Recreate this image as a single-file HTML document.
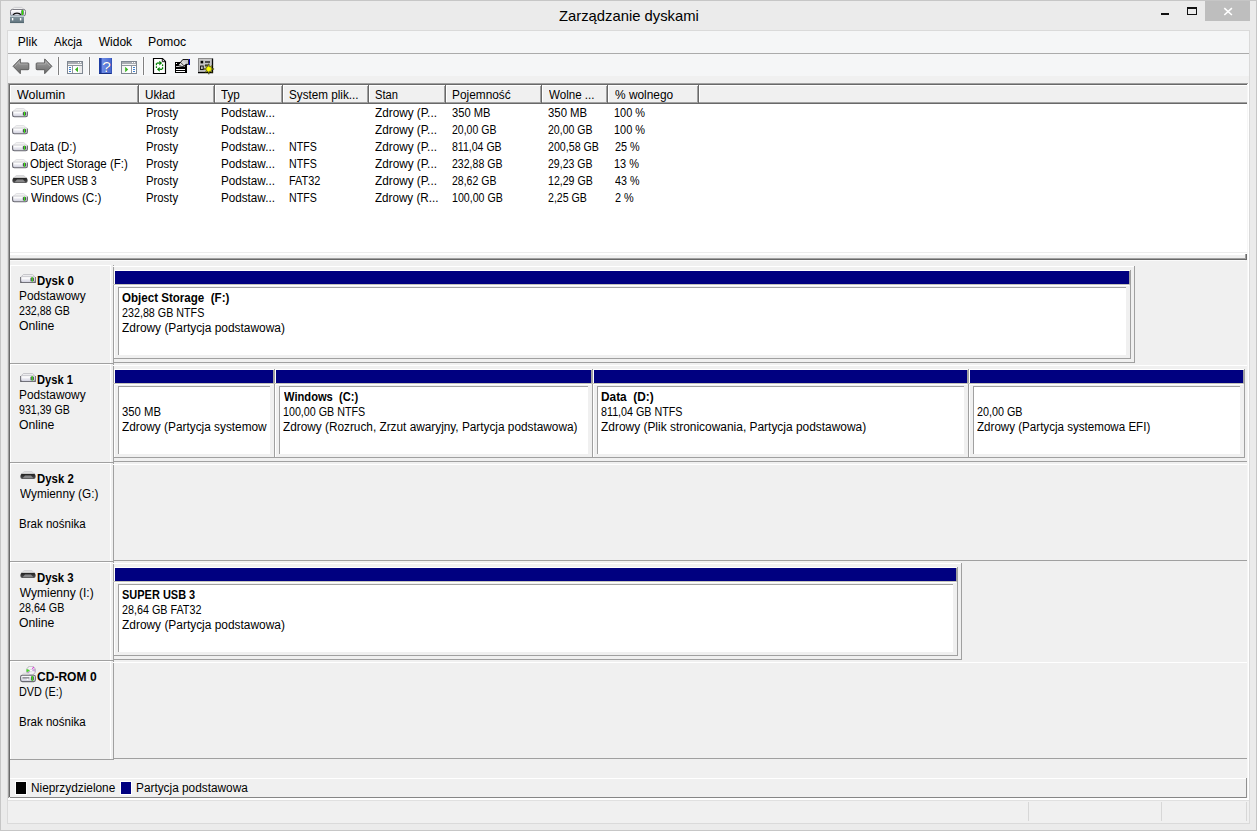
<!DOCTYPE html>
<html lang="pl"><head><meta charset="utf-8"><title>Zarządzanie dyskami</title>
<style>
html,body{margin:0;padding:0}
body{width:1257px;height:831px;position:relative;overflow:hidden;background:#ebebeb;font:12px/16px "Liberation Sans",sans-serif;color:#000}
div,span,svg{position:absolute;box-sizing:border-box}
.t{white-space:pre;line-height:16px;height:16px;transform-origin:0 0}
.b{font-weight:bold}
.nv{background:#000080}
.g{background:#a0a0a0}
.w{background:#fff}
.d{background:#696969}
.f{background:#f0f0f0}
</style></head><body>

<div style="left:0;top:0;width:1257px;height:831px;border:1px solid #c6c6c6"></div>
<div style="left:7px;top:30px;width:1243px;height:794px;border:1px solid #dadada;background:#f0f0f0"></div>
<div class="" style="left:1205px;top:1px;width:45px;height:20px;background:#bebebe"></div>
<svg style="left:1223px;top:6px" width="11" height="11" viewBox="0 0 11 11"><path d="M1.3 2.1 L8.9 9 M8.9 2.1 L1.3 9" stroke="#fff" stroke-width="1.6" fill="none"/></svg>
<div class="" style="left:1161px;top:13px;width:8px;height:2px;background:#111"></div>
<div style="left:1187px;top:7px;width:10px;height:8px;border:1px solid #111;border-top-width:2px"></div>
<div class="" style="left:8px;top:31px;width:1241px;height:22px;background:#f5f6f7"></div>
<div class="" style="left:8px;top:53px;width:1241px;height:1px;background:#ababab"></div>
<div class="" style="left:8px;top:54px;width:1241px;height:22px;background:#f5f6f7"></div>
<div class="" style="left:58px;top:57px;width:1px;height:18px;background:#808080;box-shadow:1px 0 0 #fbfbfc,-1px 0 0 #fbfbfc"></div>
<div class="" style="left:89px;top:57px;width:1px;height:18px;background:#808080;box-shadow:1px 0 0 #fbfbfc,-1px 0 0 #fbfbfc"></div>
<div class="" style="left:143px;top:57px;width:1px;height:18px;background:#808080;box-shadow:1px 0 0 #fbfbfc,-1px 0 0 #fbfbfc"></div>
<div class="" style="left:8px;top:83px;width:1241px;height:177px;background:#fff"></div>
<div class="g" style="left:8px;top:83px;width:1241px;height:1px;"></div>
<div class="g" style="left:8px;top:83px;width:1px;height:177px;"></div>
<div class="d" style="left:9px;top:84px;width:1239px;height:1px;"></div>
<div class="d" style="left:9px;top:84px;width:1px;height:175px;"></div>
<div class="f" style="left:10px;top:85px;width:1237px;height:19px;"></div>
<div class="w" style="left:10px;top:85px;width:1237px;height:1px;"></div>
<div class="g" style="left:10px;top:102px;width:1237px;height:1px;"></div>
<div class="d" style="left:10px;top:103px;width:1237px;height:1px;"></div>
<div class="g" style="left:137px;top:86px;width:1px;height:17px;"></div>
<div class="d" style="left:138px;top:85px;width:1px;height:19px;"></div>
<div class="w" style="left:139px;top:85px;width:1px;height:17px;"></div>
<div class="g" style="left:213px;top:86px;width:1px;height:17px;"></div>
<div class="d" style="left:214px;top:85px;width:1px;height:19px;"></div>
<div class="w" style="left:215px;top:85px;width:1px;height:17px;"></div>
<div class="g" style="left:281px;top:86px;width:1px;height:17px;"></div>
<div class="d" style="left:282px;top:85px;width:1px;height:19px;"></div>
<div class="w" style="left:283px;top:85px;width:1px;height:17px;"></div>
<div class="g" style="left:367px;top:86px;width:1px;height:17px;"></div>
<div class="d" style="left:368px;top:85px;width:1px;height:19px;"></div>
<div class="w" style="left:369px;top:85px;width:1px;height:17px;"></div>
<div class="g" style="left:444px;top:86px;width:1px;height:17px;"></div>
<div class="d" style="left:445px;top:85px;width:1px;height:19px;"></div>
<div class="w" style="left:446px;top:85px;width:1px;height:17px;"></div>
<div class="g" style="left:540px;top:86px;width:1px;height:17px;"></div>
<div class="d" style="left:541px;top:85px;width:1px;height:19px;"></div>
<div class="w" style="left:542px;top:85px;width:1px;height:17px;"></div>
<div class="g" style="left:606px;top:86px;width:1px;height:17px;"></div>
<div class="d" style="left:607px;top:85px;width:1px;height:19px;"></div>
<div class="w" style="left:608px;top:85px;width:1px;height:17px;"></div>
<div class="g" style="left:697px;top:86px;width:1px;height:17px;"></div>
<div class="d" style="left:698px;top:85px;width:1px;height:19px;"></div>
<div class="w" style="left:699px;top:85px;width:1px;height:17px;"></div>
<div class="w" style="left:10px;top:85px;width:1px;height:17px;"></div>
<div class="" style="left:10px;top:252px;width:1237px;height:1px;background:#ececec"></div>
<div class="f" style="left:10px;top:255px;width:1237px;height:5px;"></div>
<div class="g" style="left:10px;top:258px;width:1237px;height:1px;"></div>
<div class="d" style="left:10px;top:259px;width:1237px;height:1px;"></div>
<div class="g" style="left:1245px;top:254px;width:1px;height:5px;"></div>
<div class="d" style="left:1246px;top:254px;width:1px;height:6px;"></div>
<div class="f" style="left:8px;top:260px;width:1241px;height:538px;"></div>
<div class="g" style="left:8px;top:258px;width:1px;height:540px;"></div>
<div class="d" style="left:9px;top:259px;width:1px;height:538px;"></div>
<div class="" style="left:10px;top:260px;width:1235px;height:1px;background:#fafafa"></div>
<div class="" style="left:1247px;top:84px;width:1px;height:715px;background:#f6f6f6"></div>
<div class="w" style="left:1248px;top:83px;width:1px;height:717px;"></div>
<div class="w" style="left:10px;top:265px;width:101px;height:1px;"></div>
<div class="w" style="left:10px;top:265px;width:1px;height:98px;"></div>
<div class="w" style="left:110px;top:265px;width:1px;height:98px;"></div>
<div class="g" style="left:10px;top:363px;width:103px;height:1px;"></div>
<div class="g" style="left:113px;top:265px;width:1px;height:99px;"></div>
<div class="w" style="left:113px;top:266px;width:1021px;height:1px;"></div>
<div class="w" style="left:10px;top:364px;width:101px;height:1px;"></div>
<div class="w" style="left:10px;top:364px;width:1px;height:98px;"></div>
<div class="w" style="left:110px;top:364px;width:1px;height:98px;"></div>
<div class="g" style="left:10px;top:462px;width:103px;height:1px;"></div>
<div class="g" style="left:113px;top:364px;width:1px;height:99px;"></div>
<div class="w" style="left:113px;top:365px;width:1134px;height:1px;"></div>
<div class="w" style="left:10px;top:463px;width:101px;height:1px;"></div>
<div class="w" style="left:10px;top:463px;width:1px;height:98px;"></div>
<div class="w" style="left:110px;top:463px;width:1px;height:98px;"></div>
<div class="g" style="left:10px;top:561px;width:103px;height:1px;"></div>
<div class="g" style="left:113px;top:463px;width:1px;height:99px;"></div>
<div class="w" style="left:113px;top:464px;width:1134px;height:1px;"></div>
<div class="w" style="left:10px;top:562px;width:101px;height:1px;"></div>
<div class="w" style="left:10px;top:562px;width:1px;height:98px;"></div>
<div class="w" style="left:110px;top:562px;width:1px;height:98px;"></div>
<div class="g" style="left:10px;top:660px;width:103px;height:1px;"></div>
<div class="g" style="left:113px;top:562px;width:1px;height:99px;"></div>
<div class="w" style="left:113px;top:563px;width:848px;height:1px;"></div>
<div class="w" style="left:10px;top:661px;width:101px;height:1px;"></div>
<div class="w" style="left:10px;top:661px;width:1px;height:98px;"></div>
<div class="w" style="left:110px;top:661px;width:1px;height:98px;"></div>
<div class="g" style="left:10px;top:759px;width:103px;height:1px;"></div>
<div class="g" style="left:113px;top:661px;width:1px;height:99px;"></div>
<div class="w" style="left:113px;top:662px;width:1134px;height:1px;"></div>
<div class="g" style="left:114px;top:362px;width:1021px;height:1px;"></div>
<div class="g" style="left:1134px;top:266px;width:1px;height:97px;"></div>
<div class="g" style="left:114px;top:461px;width:1133px;height:1px;"></div>
<div class="g" style="left:114px;top:560px;width:1133px;height:1px;"></div>
<div class="g" style="left:114px;top:659px;width:848px;height:1px;"></div>
<div class="g" style="left:961px;top:563px;width:1px;height:97px;"></div>
<div class="g" style="left:114px;top:758px;width:1133px;height:1px;"></div>
<div class="w" style="left:114px;top:270px;width:1016px;height:1px;"></div>
<div class="w" style="left:114px;top:270px;width:1px;height:88px;"></div>
<div class="g" style="left:1130px;top:270px;width:1px;height:89px;"></div>
<div class="g" style="left:114px;top:358px;width:1017px;height:1px;"></div>
<div class="nv" style="left:115px;top:271px;width:1014px;height:13px;"></div>
<div class="g" style="left:1129px;top:271px;width:1px;height:13px;"></div>
<div class="" style="left:113px;top:284px;width:1017px;height:1px;background:#c4c4bc"></div>
<div class="w" style="left:115px;top:285px;width:1014px;height:1px;"></div>
<div style="left:118px;top:287px;width:1008px;height:68px;background:#fff;border-left:1px solid #a0a0a0;border-top:1px solid #a0a0a0"></div>
<div class="w" style="left:114px;top:369px;width:160px;height:1px;"></div>
<div class="w" style="left:114px;top:369px;width:1px;height:88px;"></div>
<div class="g" style="left:274px;top:369px;width:1px;height:89px;"></div>
<div class="g" style="left:114px;top:457px;width:161px;height:1px;"></div>
<div class="nv" style="left:115px;top:370px;width:158px;height:13px;"></div>
<div class="g" style="left:273px;top:370px;width:1px;height:13px;"></div>
<div class="" style="left:113px;top:383px;width:161px;height:1px;background:#c4c4bc"></div>
<div class="w" style="left:115px;top:384px;width:158px;height:1px;"></div>
<div style="left:118px;top:386px;width:152px;height:68px;background:#fff;border-left:1px solid #a0a0a0;border-top:1px solid #a0a0a0"></div>
<div class="w" style="left:275px;top:369px;width:317px;height:1px;"></div>
<div class="w" style="left:275px;top:369px;width:1px;height:88px;"></div>
<div class="g" style="left:592px;top:369px;width:1px;height:89px;"></div>
<div class="g" style="left:275px;top:457px;width:318px;height:1px;"></div>
<div class="nv" style="left:276px;top:370px;width:315px;height:13px;"></div>
<div class="g" style="left:591px;top:370px;width:1px;height:13px;"></div>
<div class="" style="left:274px;top:383px;width:318px;height:1px;background:#c4c4bc"></div>
<div class="w" style="left:276px;top:384px;width:315px;height:1px;"></div>
<div style="left:279px;top:386px;width:309px;height:68px;background:#fff;border-left:1px solid #a0a0a0;border-top:1px solid #a0a0a0"></div>
<div class="w" style="left:593px;top:369px;width:375px;height:1px;"></div>
<div class="w" style="left:593px;top:369px;width:1px;height:88px;"></div>
<div class="g" style="left:968px;top:369px;width:1px;height:89px;"></div>
<div class="g" style="left:593px;top:457px;width:376px;height:1px;"></div>
<div class="nv" style="left:594px;top:370px;width:373px;height:13px;"></div>
<div class="g" style="left:967px;top:370px;width:1px;height:13px;"></div>
<div class="" style="left:592px;top:383px;width:376px;height:1px;background:#c4c4bc"></div>
<div class="w" style="left:594px;top:384px;width:373px;height:1px;"></div>
<div style="left:597px;top:386px;width:367px;height:68px;background:#fff;border-left:1px solid #a0a0a0;border-top:1px solid #a0a0a0"></div>
<div class="w" style="left:969px;top:369px;width:275px;height:1px;"></div>
<div class="w" style="left:969px;top:369px;width:1px;height:88px;"></div>
<div class="g" style="left:1244px;top:369px;width:1px;height:89px;"></div>
<div class="g" style="left:969px;top:457px;width:276px;height:1px;"></div>
<div class="nv" style="left:970px;top:370px;width:273px;height:13px;"></div>
<div class="g" style="left:1243px;top:370px;width:1px;height:13px;"></div>
<div class="" style="left:968px;top:383px;width:276px;height:1px;background:#c4c4bc"></div>
<div class="w" style="left:970px;top:384px;width:273px;height:1px;"></div>
<div style="left:973px;top:386px;width:267px;height:68px;background:#fff;border-left:1px solid #a0a0a0;border-top:1px solid #a0a0a0"></div>
<div class="w" style="left:114px;top:567px;width:843px;height:1px;"></div>
<div class="w" style="left:114px;top:567px;width:1px;height:88px;"></div>
<div class="g" style="left:957px;top:567px;width:1px;height:89px;"></div>
<div class="g" style="left:114px;top:655px;width:844px;height:1px;"></div>
<div class="nv" style="left:115px;top:568px;width:841px;height:13px;"></div>
<div class="g" style="left:956px;top:568px;width:1px;height:13px;"></div>
<div class="" style="left:113px;top:581px;width:844px;height:1px;background:#c4c4bc"></div>
<div class="w" style="left:115px;top:582px;width:841px;height:1px;"></div>
<div style="left:118px;top:584px;width:835px;height:68px;background:#fff;border-left:1px solid #a0a0a0;border-top:1px solid #a0a0a0"></div>
<div class="w" style="left:10px;top:778px;width:1237px;height:1px;"></div>
<div class="w" style="left:15px;top:781px;width:12px;height:14px;"></div>
<div class="" style="left:16px;top:782px;width:10px;height:12px;background:#000"></div>
<div class="w" style="left:120px;top:781px;width:12px;height:14px;"></div>
<div class="nv" style="left:121px;top:782px;width:10px;height:12px;"></div>
<div class="" style="left:10px;top:797px;width:1237px;height:1px;background:#868686"></div>
<div class="" style="left:1246px;top:778px;width:1px;height:20px;background:#909090"></div>
<div class="w" style="left:8px;top:798px;width:1241px;height:2px;"></div>
<div style="left:8px;top:800px;width:1241px;height:23px;background:#f0f0f0;border-top:1px solid #e0e0e0"></div>
<div class="" style="left:1028px;top:802px;width:1px;height:19px;background:#d7d7d7"></div>
<div class="" style="left:1161px;top:802px;width:1px;height:19px;background:#d7d7d7"></div>
<div class="" style="left:1246px;top:802px;width:1px;height:19px;background:#d7d7d7"></div>
<span class="t" style="left:558.63px;top:7.5px;transform:scaleX(0.9869);font-size:15px">Zarządzanie dyskami</span>
<span class="t" style="left:17.82px;top:34.0px">Plik</span>
<span class="t" style="left:53.78px;top:34.0px;transform:scaleX(0.9584)">Akcja</span>
<span class="t" style="left:98.75px;top:34.0px">Widok</span>
<span class="t" style="left:147.89px;top:34.0px;transform:scaleX(1.0237)">Pomoc</span>
<span class="t" style="left:16.65px;top:86.5px;transform:scaleX(1.0383)">Wolumin</span>
<span class="t" style="left:145.40px;top:86.5px;transform:scaleX(0.9765)">Układ</span>
<span class="t" style="left:221.44px;top:86.5px;transform:scaleX(0.9724)">Typ</span>
<span class="t" style="left:288.97px;top:86.5px;transform:scaleX(0.9740)">System plik...</span>
<span class="t" style="left:375.19px;top:86.5px;transform:scaleX(0.9289)">Stan</span>
<span class="t" style="left:451.93px;top:86.5px;transform:scaleX(0.9886)">Pojemność</span>
<span class="t" style="left:548.85px;top:86.5px;transform:scaleX(0.9653)">Wolne ...</span>
<span class="t" style="left:614.78px;top:86.5px;transform:scaleX(0.9918)">% wolnego</span>
<span class="t" style="left:145.57px;top:105.0px;transform:scaleX(0.9424)">Prosty</span>
<span class="t" style="left:221.04px;top:105.0px;transform:scaleX(0.9732)">Podstaw...</span>
<span class="t" style="left:375.33px;top:105.0px;transform:scaleX(0.9810)">Zdrowy (P...</span>
<span class="t" style="left:452.48px;top:105.0px;transform:scaleX(0.9288)">350 MB</span>
<span class="t" style="left:548.27px;top:105.0px;transform:scaleX(0.9462)">350 MB</span>
<span class="t" style="left:614.37px;top:105.0px;transform:scaleX(0.9118)">100 %</span>
<span class="t" style="left:145.57px;top:122.0px;transform:scaleX(0.9424)">Prosty</span>
<span class="t" style="left:221.04px;top:122.0px;transform:scaleX(0.9732)">Podstaw...</span>
<span class="t" style="left:375.33px;top:122.0px;transform:scaleX(0.9810)">Zdrowy (P...</span>
<span class="t" style="left:452.37px;top:122.0px;transform:scaleX(0.8754)">20,00 GB</span>
<span class="t" style="left:548.17px;top:122.0px;transform:scaleX(0.8774)">20,00 GB</span>
<span class="t" style="left:614.37px;top:122.0px;transform:scaleX(0.9118)">100 %</span>
<span class="t" style="left:29.96px;top:139.0px;transform:scaleX(0.9500)">Data (D:)</span>
<span class="t" style="left:145.57px;top:139.0px;transform:scaleX(0.9424)">Prosty</span>
<span class="t" style="left:221.04px;top:139.0px;transform:scaleX(0.9732)">Podstaw...</span>
<span class="t" style="left:289.33px;top:139.0px;transform:scaleX(0.8861)">NTFS</span>
<span class="t" style="left:375.33px;top:139.0px;transform:scaleX(0.9810)">Zdrowy (P...</span>
<span class="t" style="left:452.44px;top:139.0px;transform:scaleX(0.8787)">811,04 GB</span>
<span class="t" style="left:548.16px;top:139.0px;transform:scaleX(0.8871)">200,58 GB</span>
<span class="t" style="left:614.65px;top:139.0px;transform:scaleX(0.9042)">25 %</span>
<span class="t" style="left:30.35px;top:156.0px;transform:scaleX(0.9591)">Object Storage (F:)</span>
<span class="t" style="left:145.57px;top:156.0px;transform:scaleX(0.9424)">Prosty</span>
<span class="t" style="left:221.04px;top:156.0px;transform:scaleX(0.9732)">Podstaw...</span>
<span class="t" style="left:289.33px;top:156.0px;transform:scaleX(0.8861)">NTFS</span>
<span class="t" style="left:375.33px;top:156.0px;transform:scaleX(0.9810)">Zdrowy (P...</span>
<span class="t" style="left:452.37px;top:156.0px;transform:scaleX(0.8800)">232,88 GB</span>
<span class="t" style="left:548.17px;top:156.0px;transform:scaleX(0.8774)">29,23 GB</span>
<span class="t" style="left:614.36px;top:156.0px;transform:scaleX(0.9150)">13 %</span>
<span class="t" style="left:30.44px;top:173.0px;transform:scaleX(0.8405)">SUPER USB 3</span>
<span class="t" style="left:145.57px;top:173.0px;transform:scaleX(0.9424)">Prosty</span>
<span class="t" style="left:221.04px;top:173.0px;transform:scaleX(0.9732)">Podstaw...</span>
<span class="t" style="left:289.30px;top:173.0px;transform:scaleX(0.9122)">FAT32</span>
<span class="t" style="left:375.33px;top:173.0px;transform:scaleX(0.9810)">Zdrowy (P...</span>
<span class="t" style="left:452.37px;top:173.0px;transform:scaleX(0.8754)">28,62 GB</span>
<span class="t" style="left:547.89px;top:173.0px;transform:scaleX(0.8829)">12,29 GB</span>
<span class="t" style="left:614.95px;top:173.0px;transform:scaleX(0.8931)">43 %</span>
<span class="t" style="left:30.85px;top:190.0px;transform:scaleX(0.9788)">Windows (C:)</span>
<span class="t" style="left:145.57px;top:190.0px;transform:scaleX(0.9424)">Prosty</span>
<span class="t" style="left:221.04px;top:190.0px;transform:scaleX(0.9732)">Podstaw...</span>
<span class="t" style="left:289.33px;top:190.0px;transform:scaleX(0.8861)">NTFS</span>
<span class="t" style="left:375.33px;top:190.0px;transform:scaleX(0.9709)">Zdrowy (R...</span>
<span class="t" style="left:452.09px;top:190.0px;transform:scaleX(0.8849)">100,00 GB</span>
<span class="t" style="left:548.17px;top:190.0px;transform:scaleX(0.8834)">2,25 GB</span>
<span class="t" style="left:614.65px;top:190.0px;transform:scaleX(0.9060)">2 %</span>
<span class="t b" style="left:37.24px;top:273.0px;transform:scaleX(0.9492)">Dysk 0</span>
<span class="t" style="left:18.83px;top:288.0px;transform:scaleX(0.9886)">Podstawowy</span>
<span class="t" style="left:19.27px;top:303.0px;transform:scaleX(0.8853)">232,88 GB</span>
<span class="t" style="left:19.22px;top:318.0px;transform:scaleX(1.0183)">Online</span>
<span class="t b" style="left:37.26px;top:372.0px;transform:scaleX(0.9266)">Dysk 1</span>
<span class="t" style="left:18.83px;top:387.0px;transform:scaleX(0.9886)">Podstawowy</span>
<span class="t" style="left:19.30px;top:402.0px;transform:scaleX(0.8847)">931,39 GB</span>
<span class="t" style="left:19.22px;top:417.0px;transform:scaleX(1.0183)">Online</span>
<span class="t b" style="left:37.24px;top:471.0px;transform:scaleX(0.9489)">Dysk 2</span>
<span class="t" style="left:19.75px;top:486.0px;transform:scaleX(0.9810)">Wymienny (G:)</span>
<span class="t" style="left:18.85px;top:516.0px;transform:scaleX(0.9607)">Brak nośnika</span>
<span class="t b" style="left:37.24px;top:570.0px;transform:scaleX(0.9477)">Dysk 3</span>
<span class="t" style="left:19.75px;top:585.0px">Wymienny (I:)</span>
<span class="t" style="left:19.26px;top:600.0px;transform:scaleX(0.8936)">28,64 GB</span>
<span class="t" style="left:19.22px;top:615.0px;transform:scaleX(1.0183)">Online</span>
<span class="t b" style="left:36.91px;top:669.0px;transform:scaleX(1.0043)">CD-ROM 0</span>
<span class="t" style="left:18.91px;top:684.0px;transform:scaleX(0.9012)">DVD (E:)</span>
<span class="t" style="left:18.85px;top:714.0px;transform:scaleX(0.9607)">Brak nośnika</span>
<span class="t b" style="left:122.23px;top:290.0px;transform:scaleX(0.9642)">Object Storage  (F:)</span>
<span class="t" style="left:122.16px;top:305.0px;transform:scaleX(0.8945)">232,88 GB NTFS</span>
<span class="t" style="left:122.32px;top:320.0px;transform:scaleX(0.9931)">Zdrowy (Partycja podstawowa)</span>
<span class="t" style="left:122.27px;top:404.0px;transform:scaleX(0.9412)">350 MB</span>
<span class="t" style="left:122.32px;top:419.0px;transform:scaleX(0.9860)">Zdrowy (Partycja systemow</span>
<span class="t b" style="left:283.69px;top:389.0px;transform:scaleX(0.9285)">Windows  (C:)</span>
<span class="t" style="left:282.88px;top:404.0px;transform:scaleX(0.8921)">100,00 GB NTFS</span>
<span class="t" style="left:283.33px;top:419.0px;transform:scaleX(0.9840)">Zdrowy (Rozruch, Zrzut awaryjny, Partycja podstawowa)</span>
<span class="t b" style="left:600.91px;top:389.0px;transform:scaleX(0.9878)">Data  (D:)</span>
<span class="t" style="left:601.23px;top:404.0px;transform:scaleX(0.8937)">811,04 GB NTFS</span>
<span class="t" style="left:601.32px;top:419.0px;transform:scaleX(0.9942)">Zdrowy (Plik stronicowania, Partycja podstawowa)</span>
<span class="t" style="left:976.96px;top:404.0px;transform:scaleX(0.8976)">20,00 GB</span>
<span class="t" style="left:977.13px;top:419.0px;transform:scaleX(0.9661)">Zdrowy (Partycja systemowa EFI)</span>
<span class="t b" style="left:122.38px;top:587.0px;transform:scaleX(0.9149)">SUPER USB 3</span>
<span class="t" style="left:122.16px;top:602.0px;transform:scaleX(0.8971)">28,64 GB FAT32</span>
<span class="t" style="left:122.32px;top:617.0px;transform:scaleX(0.9931)">Zdrowy (Partycja podstawowa)</span>
<span class="t" style="left:31.23px;top:780.0px;transform:scaleX(0.9874)">Nieprzydzielone</span>
<span class="t" style="left:135.53px;top:780.0px;transform:scaleX(0.9857)">Partycja podstawowa</span>
<svg width="0" height="0" style="left:0;top:0"><defs>
<linearGradient id="gd" x1="0" y1="0" x2="0" y2="1"><stop offset="0" stop-color="#fff"/><stop offset=".35" stop-color="#f4f4f8"/><stop offset="1" stop-color="#c8c8d8"/></linearGradient>
<linearGradient id="gl" x1="0" y1="0" x2="0" y2="1"><stop offset="0" stop-color="#d8d8d8"/><stop offset="1" stop-color="#f4f4f4"/></linearGradient>
<linearGradient id="ga" x1="0" y1="0" x2="0" y2="1"><stop offset="0" stop-color="#a6a6a6"/><stop offset="1" stop-color="#6a6a6a"/></linearGradient>
<linearGradient id="gh" x1="0" y1="0" x2="1" y2="0"><stop offset="0" stop-color="#7d98ee"/><stop offset="1" stop-color="#4466cc"/></linearGradient>
<linearGradient id="gt" x1="0" y1="0" x2="0" y2="1"><stop offset="0" stop-color="#9fb0ba"/><stop offset=".25" stop-color="#7f929c"/><stop offset="1" stop-color="#5f727c"/></linearGradient>
<linearGradient id="gu" x1="0" y1="0" x2="0" y2="1"><stop offset="0" stop-color="#1c1c1c"/><stop offset="1" stop-color="#5a5a5c"/></linearGradient>
</defs></svg>
<svg style="left:12px;top:108px" width="16" height="10" viewBox="0 0 16 10"><path d="M4.2 .5 H11.8 L15 3.5 H1 Z" fill="#f2f2f2" stroke="#d2d2d6" stroke-width=".6"/><rect x=".5" y="2.9" width="15" height="6" rx="1.7" fill="url(#gd)"/><rect x="1.8" y="3.4" width="12.4" height="1.2" fill="#fff"/><path d="M1 3.1 H15" stroke="#c2c2c8" stroke-width=".7"/><path d="M.6 3.5 V7.1 Q.6 8.8 2.3 8.8 H13.7 Q15.4 8.8 15.4 7.1 V3.5" fill="none" stroke="#6a6a72" stroke-width="1.1"/><rect x="10.8" y="3.9" width="3.4" height="3.6" rx=".9" fill="#4e3e62"/><rect x="11.85" y="3.5" width="1.3" height="4.4" rx=".6" fill="#3eea10"/></svg>
<svg style="left:12px;top:125px" width="16" height="10" viewBox="0 0 16 10"><path d="M4.2 .5 H11.8 L15 3.5 H1 Z" fill="#f2f2f2" stroke="#d2d2d6" stroke-width=".6"/><rect x=".5" y="2.9" width="15" height="6" rx="1.7" fill="url(#gd)"/><rect x="1.8" y="3.4" width="12.4" height="1.2" fill="#fff"/><path d="M1 3.1 H15" stroke="#c2c2c8" stroke-width=".7"/><path d="M.6 3.5 V7.1 Q.6 8.8 2.3 8.8 H13.7 Q15.4 8.8 15.4 7.1 V3.5" fill="none" stroke="#6a6a72" stroke-width="1.1"/><rect x="10.8" y="3.9" width="3.4" height="3.6" rx=".9" fill="#4e3e62"/><rect x="11.85" y="3.5" width="1.3" height="4.4" rx=".6" fill="#3eea10"/></svg>
<svg style="left:12px;top:142px" width="16" height="10" viewBox="0 0 16 10"><path d="M4.2 .5 H11.8 L15 3.5 H1 Z" fill="#f2f2f2" stroke="#d2d2d6" stroke-width=".6"/><rect x=".5" y="2.9" width="15" height="6" rx="1.7" fill="url(#gd)"/><rect x="1.8" y="3.4" width="12.4" height="1.2" fill="#fff"/><path d="M1 3.1 H15" stroke="#c2c2c8" stroke-width=".7"/><path d="M.6 3.5 V7.1 Q.6 8.8 2.3 8.8 H13.7 Q15.4 8.8 15.4 7.1 V3.5" fill="none" stroke="#6a6a72" stroke-width="1.1"/><rect x="10.8" y="3.9" width="3.4" height="3.6" rx=".9" fill="#4e3e62"/><rect x="11.85" y="3.5" width="1.3" height="4.4" rx=".6" fill="#3eea10"/></svg>
<svg style="left:12px;top:159px" width="16" height="10" viewBox="0 0 16 10"><path d="M4.2 .5 H11.8 L15 3.5 H1 Z" fill="#f2f2f2" stroke="#d2d2d6" stroke-width=".6"/><rect x=".5" y="2.9" width="15" height="6" rx="1.7" fill="url(#gd)"/><rect x="1.8" y="3.4" width="12.4" height="1.2" fill="#fff"/><path d="M1 3.1 H15" stroke="#c2c2c8" stroke-width=".7"/><path d="M.6 3.5 V7.1 Q.6 8.8 2.3 8.8 H13.7 Q15.4 8.8 15.4 7.1 V3.5" fill="none" stroke="#6a6a72" stroke-width="1.1"/><rect x="10.8" y="3.9" width="3.4" height="3.6" rx=".9" fill="#4e3e62"/><rect x="11.85" y="3.5" width="1.3" height="4.4" rx=".6" fill="#3eea10"/></svg>
<svg style="left:12px;top:174.7px" width="16" height="10" viewBox="0 0 16 10"><path d="M4.2 .6 H11.8 L14.8 3.4 H1.2 Z" fill="url(#gl)" stroke="#c8c8cc" stroke-width=".6"/><rect x=".4" y="3" width="15.2" height="5" rx="2" fill="url(#gu)"/><path d="M5 4.6 H11 L13.4 7.2 H2.6 Z" fill="#868688"/><path d="M1 3.3 H15" stroke="#2a2a2a" stroke-width=".8"/></svg>
<svg style="left:12px;top:193px" width="16" height="10" viewBox="0 0 16 10"><path d="M4.2 .5 H11.8 L15 3.5 H1 Z" fill="#f2f2f2" stroke="#d2d2d6" stroke-width=".6"/><rect x=".5" y="2.9" width="15" height="6" rx="1.7" fill="url(#gd)"/><rect x="1.8" y="3.4" width="12.4" height="1.2" fill="#fff"/><path d="M1 3.1 H15" stroke="#c2c2c8" stroke-width=".7"/><path d="M.6 3.5 V7.1 Q.6 8.8 2.3 8.8 H13.7 Q15.4 8.8 15.4 7.1 V3.5" fill="none" stroke="#6a6a72" stroke-width="1.1"/><rect x="10.8" y="3.9" width="3.4" height="3.6" rx=".9" fill="#4e3e62"/><rect x="11.85" y="3.5" width="1.3" height="4.4" rx=".6" fill="#3eea10"/></svg>
<svg style="left:20px;top:274px" width="16" height="9" viewBox="0 0 16 9"><path d="M3.4 .5 H12.6 L15 2.9 H1 Z" fill="#ececee" stroke="#b6b6bc" stroke-width=".7"/><rect x=".5" y="2.5" width="15" height="6.4" rx="1" fill="url(#gd)"/><rect x="2.4" y="3.1" width="9" height="1.3" fill="#fff"/><path d="M1 2.7 H15" stroke="#b9b9bf" stroke-width=".7"/><path d="M.6 2.9 V8.5 H15.4 V2.9" fill="none" stroke="#72727a" stroke-width="1.1"/><path d="M1 7.2 L2.4 8.6 H1Z M15 7.2 L13.6 8.6 H15Z" fill="#62626a"/><rect x="10.5" y="3.5" width="3.4" height="3.8" rx=".9" fill="#4e3e62"/><rect x="11.55" y="3.1" width="1.3" height="4.6" rx=".6" fill="#3eea10"/></svg>
<svg style="left:20px;top:373px" width="16" height="9" viewBox="0 0 16 9"><path d="M3.4 .5 H12.6 L15 2.9 H1 Z" fill="#ececee" stroke="#b6b6bc" stroke-width=".7"/><rect x=".5" y="2.5" width="15" height="6.4" rx="1" fill="url(#gd)"/><rect x="2.4" y="3.1" width="9" height="1.3" fill="#fff"/><path d="M1 2.7 H15" stroke="#b9b9bf" stroke-width=".7"/><path d="M.6 2.9 V8.5 H15.4 V2.9" fill="none" stroke="#72727a" stroke-width="1.1"/><path d="M1 7.2 L2.4 8.6 H1Z M15 7.2 L13.6 8.6 H15Z" fill="#62626a"/><rect x="10.5" y="3.5" width="3.4" height="3.8" rx=".9" fill="#4e3e62"/><rect x="11.55" y="3.1" width="1.3" height="4.6" rx=".6" fill="#3eea10"/></svg>
<svg style="left:20px;top:470.7px" width="16" height="10" viewBox="0 0 16 10"><path d="M4.2 .6 H11.8 L14.8 3.4 H1.2 Z" fill="url(#gl)" stroke="#c8c8cc" stroke-width=".6"/><rect x=".4" y="3" width="15.2" height="5" rx="2" fill="url(#gu)"/><path d="M5 4.6 H11 L13.4 7.2 H2.6 Z" fill="#868688"/><path d="M1 3.3 H15" stroke="#2a2a2a" stroke-width=".8"/></svg>
<svg style="left:20px;top:569.7px" width="16" height="10" viewBox="0 0 16 10"><path d="M4.2 .6 H11.8 L14.8 3.4 H1.2 Z" fill="url(#gl)" stroke="#c8c8cc" stroke-width=".6"/><rect x=".4" y="3" width="15.2" height="5" rx="2" fill="url(#gu)"/><path d="M5 4.6 H11 L13.4 7.2 H2.6 Z" fill="#868688"/><path d="M1 3.3 H15" stroke="#2a2a2a" stroke-width=".8"/></svg>
<svg style="left:20px;top:666px" width="17" height="17" viewBox="0 0 17 17">
<circle cx="11" cy="4.6" r="4.5" fill="#f4f2f6" stroke="#a8a8ac" stroke-width=".8"/>
<path d="M11 4.6 L6.8 3 A4.5 4.5 0 0 0 6.8 6.2 Z" fill="#46dc28"/><path d="M11 4.6 L14.8 2.6 A4.5 4.5 0 0 1 15.3 5.8 Z" fill="#c8a8d8"/><path d="M11 4.6 L13.2 .8 A4.5 4.5 0 0 1 14.2 1.5Z" fill="#d838d8"/>
<path d="M11 4.6 L8 7.8 A4.5 4.5 0 0 1 6.9 6.3 Z" fill="#b890c8"/>
<circle cx="11" cy="4.6" r="1.3" fill="#fff" stroke="#c8c8d0" stroke-width=".5"/>
<path d="M3.6 7.2 H9 L10 9.3 H1.4 Z" fill="#e8e8e8" stroke="#c8c8cc" stroke-width=".5"/>
<rect x=".6" y="9.2" width="14.8" height="6.4" rx="1.8" fill="url(#gd)" stroke="#686870" stroke-width="1.1"/>
<path d="M2.4 11.9 H9.4" stroke="#5a5a62" stroke-width="1"/><rect x="6.8" y="12.8" width="1.4" height="1.2" fill="#fff"/>
<rect x="10.9" y="10.2" width="3" height="4.2" rx=".8" fill="#5a4a6a"/><rect x="11.6" y="10" width="1.5" height="4.8" rx=".6" fill="#3ee614"/>
</svg>
<svg style="left:9px;top:6px" width="18" height="18" viewBox="9 6 18 18">
<path d="M14.4 7.4 H21.6 L25 9.9 H11 Z" fill="#efefef" stroke="#c2c2c6" stroke-width=".7"/>
<rect x="10.5" y="9.5" width="15" height="6.4" rx="1.8" fill="url(#gd)" stroke="#7c7c84" stroke-width="1"/>
<path d="M12.2 10.6 H23.8" stroke="#fff" stroke-width="1"/>
<rect x="21" y="10.3" width="3" height="4.5" rx=".8" fill="#8a7a9a"/><rect x="21.7" y="10" width="1.6" height="5" rx=".6" fill="#30e000"/>
<path d="M13 15 C14.4 12.4 19.6 12.4 21 15" fill="none" stroke="#141414" stroke-width="1.3"/>
<rect x="10" y="15.4" width="14" height="7.6" fill="url(#gt)"/>
<path d="M10 16.4 H24" stroke="#c3d0d7" stroke-width="1"/>
<rect x="11.9" y="18" width="1.4" height="2.4" fill="#fff"/><rect x="19.9" y="18" width="1.4" height="2.4" fill="#fff"/>
<path d="M10 22.6 H24" stroke="#52646d" stroke-width=".8"/>
</svg>
<svg style="left:12px;top:57px" width="42" height="19" viewBox="12 57 42 19">
<path d="M13.1 66.3 L20.3 58.9 V63 H28 Q28.8 63 28.8 63.8 V68.9 Q28.8 69.7 28 69.7 H20.3 V73.7 Z" fill="url(#ga)" stroke="#5c5c5c" stroke-width="1" stroke-linejoin="round"/>
<path d="M14.8 66.3 L19.3 61.6 V64 H27.6" fill="none" stroke="#b4b4b4" stroke-width=".7"/>
<path d="M51.9 66.3 L44.7 58.9 V63 H37 Q36.2 63 36.2 63.8 V68.9 Q36.2 69.7 37 69.7 H44.7 V73.7 Z" fill="url(#ga)" stroke="#5c5c5c" stroke-width="1" stroke-linejoin="round"/>
<path d="M37.4 64 H45.7 V61.6 L50.2 66.3" fill="none" stroke="#b4b4b4" stroke-width=".7"/>
</svg>
<svg style="left:67px;top:61px" width="16" height="13" viewBox="0 0 16 13" shape-rendering="crispEdges"><rect x=".5" y=".5" width="15" height="12" fill="#fff" stroke="#7f8791"/><rect x="1" y="1" width="14" height="2" fill="#a9adb3"/><rect x="11" y="1" width="1" height="1" fill="#fff"/><rect x="13" y="1" width="1" height="1" fill="#fff"/><rect x="1" y="3" width="14" height="1" fill="#f4f4f4"/><rect x="1" y="4" width="14" height="1" fill="#8f959d"/><rect x="5" y="5" width="1" height="7" fill="#8f959d"/><rect x="2" y="6" width="2" height="1" fill="#3c7fd0"/><rect x="2" y="8" width="2" height="1" fill="#3c7fd0"/><rect x="2" y="10" width="2" height="1" fill="#3c7fd0"/><rect x="12" y="5" width="3" height="7" fill="#ececec"/><path d="M8 8.5 L11 5.8 V11.2 Z" fill="#36b41c" shape-rendering="auto"/></svg>
<svg style="left:121px;top:61px" width="16" height="13" viewBox="0 0 16 13" shape-rendering="crispEdges"><rect x=".5" y=".5" width="15" height="12" fill="#fff" stroke="#7f8791"/><rect x="1" y="1" width="14" height="2" fill="#a9adb3"/><rect x="11" y="1" width="1" height="1" fill="#fff"/><rect x="13" y="1" width="1" height="1" fill="#fff"/><rect x="1" y="3" width="14" height="1" fill="#f4f4f4"/><rect x="1" y="4" width="14" height="1" fill="#8f959d"/><rect x="10" y="5" width="1" height="7" fill="#8f959d"/><rect x="12" y="6" width="2" height="1" fill="#3c7fd0"/><rect x="12" y="8" width="2" height="1" fill="#3c7fd0"/><rect x="12" y="10" width="2" height="1" fill="#3c7fd0"/><rect x="1" y="5" width="3" height="7" fill="#f4f4f4"/><path d="M7.2 8.5 L4.2 5.8 V11.2 Z" fill="#36b41c" shape-rendering="auto"/></svg>
<svg style="left:99px;top:58px" width="13" height="16" viewBox="0 0 13 16">
<rect x="0" y="0" width="13" height="16" fill="url(#gh)"/><rect x="0" y="0" width="2.6" height="16" fill="#1f3fa4"/><rect x="0" y="15" width="13" height="1" fill="#1a2f80"/><rect x="12.2" y="0" width=".8" height="16" fill="#3450b4"/>
<text x="8.1" y="14.2" font-family="Liberation Sans, sans-serif" font-size="15.5" fill="#16307a" text-anchor="middle">?</text><text x="7.6" y="13.7" font-family="Liberation Sans, sans-serif" font-size="15.5" fill="#fff" text-anchor="middle">?</text>
</svg>
<svg style="left:152px;top:57px" width="15" height="18" viewBox="152 57 15 18">
<path d="M153.5 58.5 H162.5 L165.5 61.5 V73.5 H153.5 Z" fill="#fff" stroke="#000" stroke-width="1.15"/>
<path d="M162.3 58.5 V61.7 H165.5 Z" fill="#fff" stroke="#000" stroke-width=".9"/>
<g fill="#008000"><path d="M159.3 60.7 L162.1 63.1 L159.3 65.5 Z"/><rect x="156.8" y="62.45" width="2.8" height="1.3"/><rect x="155.8" y="63.2" width="1.25" height="2"/><rect x="155.8" y="66.3" width="1.25" height="1.7"/>
<path d="M159.7 66.9 L156.9 69.3 L159.7 71.7 Z"/><rect x="159.4" y="68.65" width="2.8" height="1.3"/><rect x="161.95" y="67.2" width="1.25" height="2"/><rect x="161.95" y="64.4" width="1.25" height="1.7"/></g>
</svg>
<svg style="left:174px;top:58px" width="17" height="16" viewBox="174 58 17 16">
<g shape-rendering="crispEdges"><rect x="175" y="62" width="12" height="11" fill="#000"/>
<rect x="176" y="63" width="1" height="1" fill="#fff"/>
<rect x="176" y="66" width="9" height="1" fill="#c8c8c8"/><rect x="176" y="69" width="9" height="1" fill="#fff"/><rect x="176" y="71" width="9" height="1" fill="#fff"/>
<rect x="189" y="59" width="1" height="6" fill="#0000c8"/></g>
<path d="M178 65.4 L182.8 59.5 H188.6 V64.4 H185.8 L183.6 66.8 Z" fill="#c4c4c4" stroke="#000" stroke-width=".9"/>
<path d="M179.4 65.4 L183.4 60.8 M180.8 66 L184.6 61.6 M182.2 66.4 L185.6 62.6" stroke="#fff" stroke-width=".7"/>
<path d="M180.6 62.4 L184.4 66.2" stroke="#000" stroke-width=".7"/>
</svg>
<svg style="left:197px;top:57px" width="18" height="18" viewBox="197 57 18 18">
<rect x="198.5" y="58.5" width="13.5" height="13.5" fill="#c6c6c6" stroke="#8a8a8a" stroke-width="1"/>
<path d="M198 72.6 H212.6 V58.6" fill="none" stroke="#000" stroke-width="1.1"/>
<rect x="200.6" y="60.8" width="2.6" height="2.6" fill="#000"/><rect x="205" y="61.4" width="5" height="1.2" fill="#000"/>
<rect x="200.6" y="66" width="2.6" height="3.6" fill="none" stroke="#000" stroke-width=".9"/><rect x="205" y="64.6" width="3" height="1" fill="#000"/>
<path d="M208.8 63.7 L209.7 66.9 L212.5 65.3 L210.9 68.1 L214.1 69.0 L210.9 69.9 L212.5 72.7 L209.7 71.1 L208.8 74.3 L207.9 71.1 L205.1 72.7 L206.7 69.9 L203.5 69.0 L206.7 68.1 L205.1 65.3 L207.9 66.9 Z" fill="#ffff00" stroke="#1a1a00" stroke-width=".55"/>
</svg>
</body></html>
